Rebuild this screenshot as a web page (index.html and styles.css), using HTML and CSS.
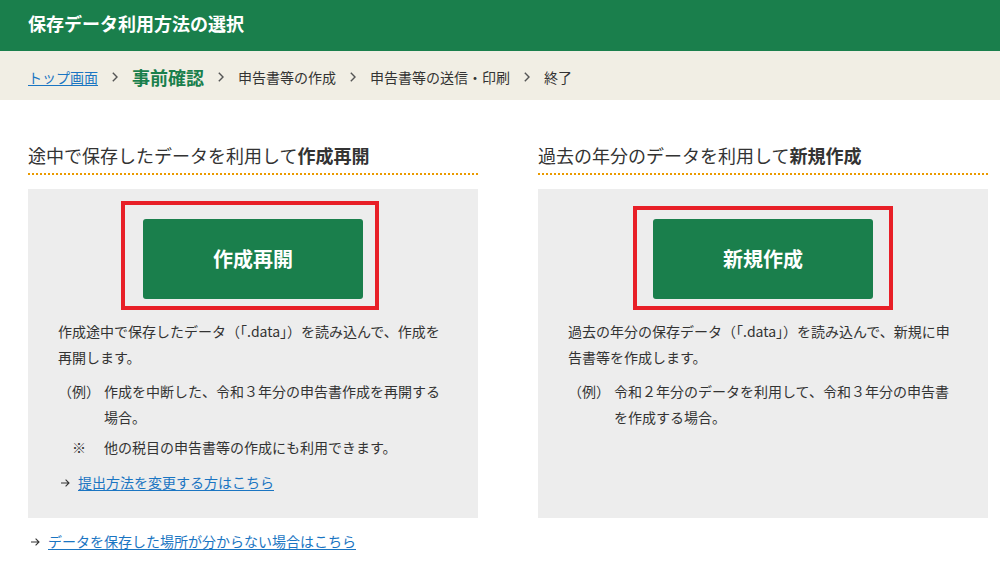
FILE: index.html
```html
<!DOCTYPE html>
<html lang="ja">
<head>
<meta charset="utf-8">
<title>保存データ利用方法の選択</title>
<link rel="stylesheet" href="styles.css">
</head>
<body>
<header class="page-header">
  <h1 class="page-title">保存データ利用方法の選択</h1>
</header>
<nav class="crumbs">
  <a class="crumb-link" href="#">トップ画面</a>
  <svg class="crumb-sep" width="6" height="10" viewBox="0 0 6 10"><polyline points="0.8,0.8 5,5 0.8,9.2" fill="none" stroke="#555" stroke-width="1.4"/></svg>
  <span class="crumb-current">事前確認</span>
  <svg class="crumb-sep" width="6" height="10" viewBox="0 0 6 10"><polyline points="0.8,0.8 5,5 0.8,9.2" fill="none" stroke="#555" stroke-width="1.4"/></svg>
  <span class="crumb">申告書等の作成</span>
  <svg class="crumb-sep" width="6" height="10" viewBox="0 0 6 10"><polyline points="0.8,0.8 5,5 0.8,9.2" fill="none" stroke="#555" stroke-width="1.4"/></svg>
  <span class="crumb">申告書等の送信・印刷</span>
  <svg class="crumb-sep" width="6" height="10" viewBox="0 0 6 10"><polyline points="0.8,0.8 5,5 0.8,9.2" fill="none" stroke="#555" stroke-width="1.4"/></svg>
  <span class="crumb">終了</span>
</nav>
<main class="main">
  <div class="columns">
    <section class="col">
      <h2 class="col-title">途中で保存したデータを利用して<strong>作成再開</strong></h2>
      <div class="panel">
        <div class="btn-wrap">
          <a class="big-btn" href="#">作成再開</a>
          <span class="mark mark-left"></span>
        </div>
        <p class="desc">作成途中で保存したデータ（「.data」）を読み込んで、作成を<br>再開します。</p>
        <div class="note note-ex">
          <span class="note-label">（例）</span>
          <span class="note-text">作成を中断した、令和３年分の申告書作成を再開する場合。</span>
        </div>
        <div class="note note-kome">
          <span class="note-label">※</span>
          <span class="note-text">他の税目の申告書等の作成にも利用できます。</span>
        </div>
        <div class="arrow-link in-panel">
          <svg class="arrow" width="9" height="8" viewBox="0 0 9 8"><path d="M0 4H8M4.6 0.7L8 4L4.6 7.3" fill="none" stroke="#333" stroke-width="1.1"/></svg>
          <a href="#">提出方法を変更する方はこちら</a>
        </div>
      </div>
    </section>
    <section class="col">
      <h2 class="col-title">過去の年分のデータを利用して<strong>新規作成</strong></h2>
      <div class="panel">
        <div class="btn-wrap">
          <a class="big-btn" href="#">新規作成</a>
          <span class="mark mark-right"></span>
        </div>
        <p class="desc">過去の年分の保存データ（「.data」）を読み込んで、新規に申<br>告書等を作成します。</p>
        <div class="note note-ex">
          <span class="note-label">（例）</span>
          <span class="note-text">令和２年分のデータを利用して、令和３年分の申告書を作成する場合。</span>
        </div>
      </div>
    </section>
  </div>
  <div class="arrow-link bottom-link">
    <svg class="arrow" width="9" height="8" viewBox="0 0 9 8"><path d="M0 4H8M4.6 0.7L8 4L4.6 7.3" fill="none" stroke="#333" stroke-width="1.1"/></svg>
    <a href="#">データを保存した場所が分からない場合はこちら</a>
  </div>
</main>
</body>
</html>
```
FILE: styles.css
```css
* { box-sizing: border-box; }
html, body { margin: 0; padding: 0; }
body {
  background: #fff;
  color: #333;
  font-family: "Noto Sans CJK JP", "Noto Sans", sans-serif;
  font-size: 14px;
  line-height: 26px;
}
a { color: #1a75c2; text-decoration: underline; text-underline-offset: 2px; }

.page-header {
  height: 51px;
  background: #1a7f4c;
  padding: 10px 28px 0;
}
.page-title {
  margin: 0;
  color: #fff;
  font-size: 18px;
  font-weight: bold;
  line-height: 26px;
}

.crumbs {
  height: 49px;
  background: #f1eee4;
  padding: 3px 28px 0;
  display: flex;
  align-items: center;
  font-size: 14px;
}
.crumb-link { color: #1a75c2; }
.crumb-sep { margin: 0 14px; flex: none; }
.crumb { color: #333; }
.crumb-current {
  color: #1a7f4c;
  font-weight: bold;
  font-size: 18px;
}

.main { padding: 42px 28px 0; }
.columns {
  display: grid;
  grid-template-columns: 450px 450px;
  column-gap: 60px;
}
.col { display: flex; flex-direction: column; }
.col-title {
  margin: 0;
  font-size: 18px;
  font-weight: normal;
  line-height: 26px;
  padding-bottom: 5px;
  border-bottom: 2px dotted #ea9a00;
  color: #333;
}
.col-title strong { font-weight: bold; }

.panel {
  flex: 1;
  margin-top: 14px;
  background: #ededed;
  padding: 30px 30px 23px;
}
.btn-wrap {
  position: relative;
  width: 220px;
  margin: 0 auto;
}
.big-btn {
  display: flex;
  align-items: center;
  justify-content: center;
  width: 220px;
  height: 80px;
  background: #1a7f4c;
  border-radius: 3px;
  color: #fff;
  font-size: 20px;
  font-weight: bold;
  text-decoration: none;
}
.mark {
  position: absolute;
  border: 4px solid #e81f27;
  pointer-events: none;
}
.mark-left { left: -22px; right: -16px; top: -18px; bottom: -11px; }
.mark-right { left: -20px; right: -20px; top: -13px; bottom: -11px; }

.desc {
  margin: 19px 0 0;
  white-space: nowrap;
}
.note {
  display: grid;
  grid-template-columns: 42px 1fr;
  column-gap: 4px;
}
.note-ex { margin-top: 8px; }
.note-kome { margin-top: 4px; }
.note-label { text-align: center; }

.arrow-link {
  display: flex;
  align-items: center;
}
.arrow { flex: none; margin: 2px 8px 0 3px; }
.in-panel { margin-top: 9px; }
.bottom-link { margin-top: 10px; }
```
